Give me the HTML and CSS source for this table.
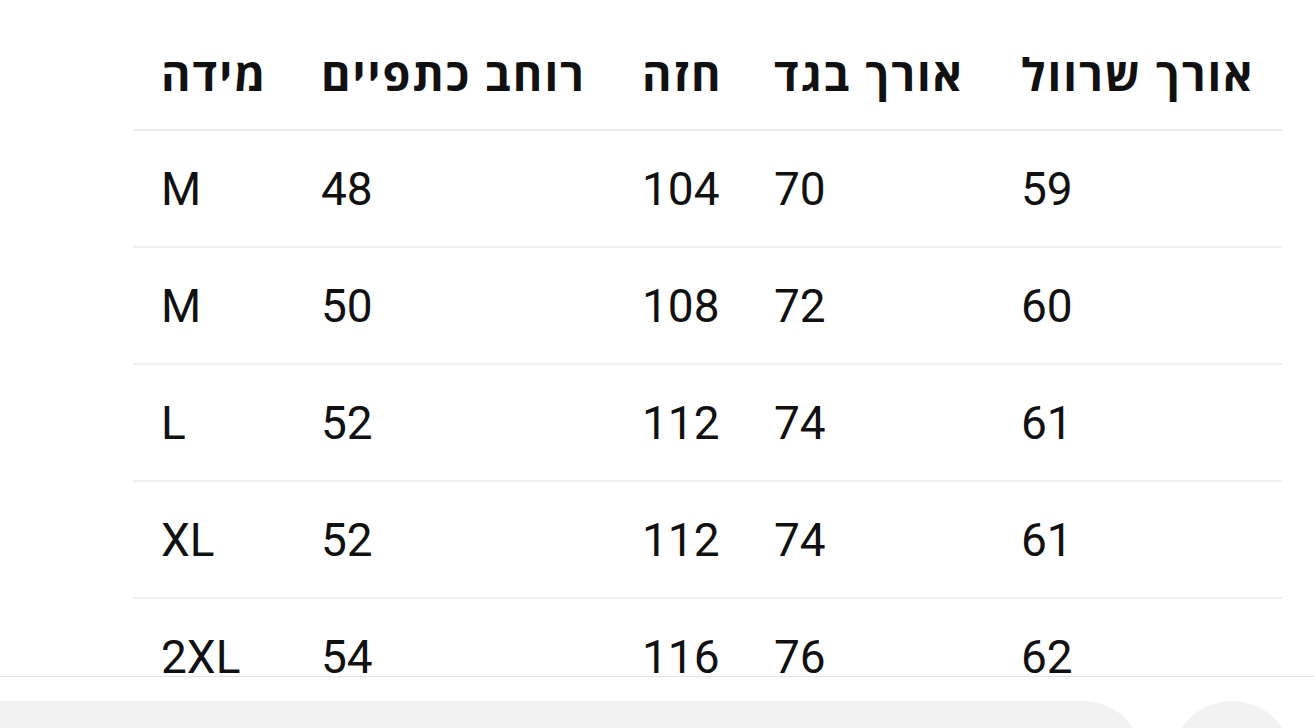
FILE: index.html
```html
<!DOCTYPE html>
<html lang="he">
<head>
<meta charset="utf-8">
<title>טבלת מידות</title>
<link rel="stylesheet" href="styles.css">
</head>
<body>
<main class="page">
  <table class="sizes">
    <colgroup>
      <col class="c1"><col class="c2"><col class="c3"><col class="c4"><col class="c5">
    </colgroup>
    <thead>
      <tr>
        <th>מידה</th>
        <th>רוחב כתפיים</th>
        <th>חזה</th>
        <th>אורך בגד</th>
        <th>אורך שרוול</th>
      </tr>
    </thead>
    <tbody>
      <tr><td>M</td><td>48</td><td>104</td><td>70</td><td>59</td></tr>
      <tr><td>M</td><td>50</td><td>108</td><td>72</td><td>60</td></tr>
      <tr><td>L</td><td>52</td><td>112</td><td>74</td><td>61</td></tr>
      <tr><td>XL</td><td>52</td><td>112</td><td>74</td><td>61</td></tr>
      <tr><td>2XL</td><td>54</td><td>116</td><td>76</td><td>62</td></tr>
    </tbody>
  </table>
</main>
<footer class="bottom-bar">
  <div class="pill"></div>
  <div class="circle"></div>
</footer>
</body>
</html>
```

FILE: styles.css
```css
html, body {
  margin: 0;
  padding: 0;
  background: #ffffff;
}

body {
  font-family: "Roboto", "Open Sans", "Noto Sans", "DejaVu Sans", sans-serif;
  color: #111111;
  overflow: hidden;
  height: 728px;
}

.page {
  padding: 17px 32px 0 133px;
}

.sizes {
  border-collapse: collapse;
  table-layout: fixed;
  width: 1149px;
}

.c1 { width: 160px; }
.c2 { width: 321px; }
.c3 { width: 132px; }
.c4 { width: 247px; }
.c5 { width: 289px; }

.sizes th,
.sizes td {
  text-align: left;
  padding: 0 10px 0 28px;
  vertical-align: middle;
  white-space: nowrap;
}

.sizes th {
  height: 112px;
  font-family: "Open Sans", "Noto Sans", "DejaVu Sans", sans-serif;
  font-weight: 700;
  font-size: 45px;
  letter-spacing: 2px;
  border-bottom: 2px solid #ebebeb;
}

.sizes td {
  height: 115px;
  font-size: 46px;
  font-weight: 400;
  border-bottom: 2px solid #efefef;
}

.bottom-bar {
  position: fixed;
  left: 0;
  right: 0;
  bottom: 0;
  background: #ffffff;
  border-top: 1px solid #e4e4e4;
  display: flex;
  align-items: flex-start;
  gap: 29px;
  padding-top: 24px;
  box-sizing: border-box;
  height: 52px;
  overflow: hidden;
}

.pill {
  flex: none;
  width: 1203px;
  height: 120px;
  margin-left: -60px;
  border-radius: 60px;
  background: #f2f2f2;
}

.circle {
  flex: none;
  width: 120px;
  height: 120px;
  border-radius: 50%;
  background: #f2f2f2;
}
```
